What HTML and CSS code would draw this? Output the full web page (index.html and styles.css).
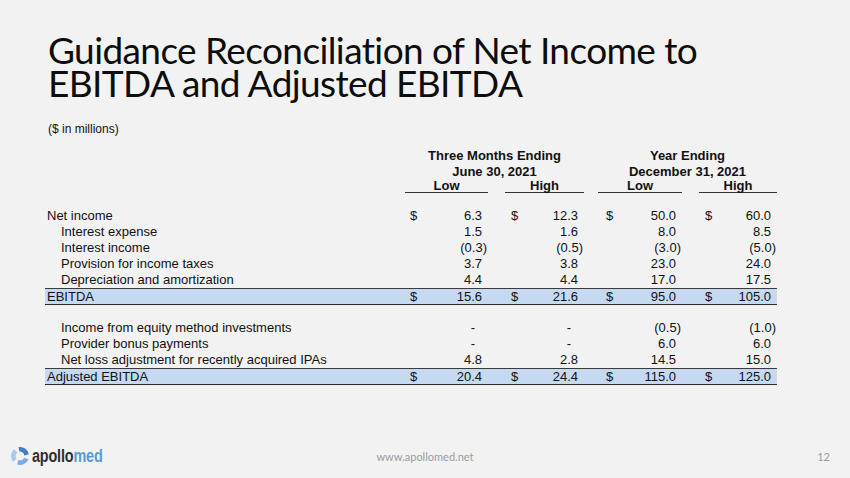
FILE: index.html
```html
<!DOCTYPE html>
<html lang="en">
<head>
<meta charset="utf-8">
<title>Guidance Reconciliation</title>
<link rel="stylesheet" href="styles.css">
</head>
<body>
<div class="slide">
  <h1 class="title">Guidance Reconciliation of Net Income to<br>EBITDA and Adjusted EBITDA</h1>
  <p class="units">($ in millions)</p>

  <div class="recon">
    <div class="grid hdr1">
      <div></div>
      <div class="span a">Three Months Ending</div>
      <div class="span b">Year Ending</div>
    </div>
    <div class="grid hdr2">
      <div></div>
      <div class="span a">June 30, 2021</div>
      <div class="span b">December 31, 2021</div>
    </div>
    <div class="grid hdr3">
      <div></div>
      <div class="g"><span class="ul">Low</span></div>
      <div class="g"><span class="ul">High</span></div>
      <div class="g"><span class="ul">Low</span></div>
      <div class="g"><span class="ul">High</span></div>
    </div>

    <div class="body">
      <div class="grid row">
        <div class="lbl">Net income</div>
        <div class="g"><span class="cur">$</span><span class="num">6.3</span></div>
        <div class="g"><span class="cur">$</span><span class="num">12.3</span></div>
        <div class="g"><span class="cur">$</span><span class="num">50.0</span></div>
        <div class="g"><span class="cur">$</span><span class="num">60.0</span></div>
      </div>
      <div class="grid row">
        <div class="lbl ind">Interest expense</div>
        <div class="g"><span class="num">1.5</span></div>
        <div class="g"><span class="num">1.6</span></div>
        <div class="g"><span class="num">8.0</span></div>
        <div class="g"><span class="num">8.5</span></div>
      </div>
      <div class="grid row">
        <div class="lbl ind">Interest income</div>
        <div class="g"><span class="num neg">(0.3)</span></div>
        <div class="g"><span class="num neg">(0.5)</span></div>
        <div class="g"><span class="num neg">(3.0)</span></div>
        <div class="g"><span class="num neg">(5.0)</span></div>
      </div>
      <div class="grid row">
        <div class="lbl ind">Provision for income taxes</div>
        <div class="g"><span class="num">3.7</span></div>
        <div class="g"><span class="num">3.8</span></div>
        <div class="g"><span class="num">23.0</span></div>
        <div class="g"><span class="num">24.0</span></div>
      </div>
      <div class="grid row">
        <div class="lbl ind">Depreciation and amortization</div>
        <div class="g"><span class="num">4.4</span></div>
        <div class="g"><span class="num">4.4</span></div>
        <div class="g"><span class="num">17.0</span></div>
        <div class="g"><span class="num">17.5</span></div>
      </div>
      <div class="grid row total">
        <div class="lbl">EBITDA</div>
        <div class="g"><span class="cur">$</span><span class="num">15.6</span></div>
        <div class="g"><span class="cur">$</span><span class="num">21.6</span></div>
        <div class="g"><span class="cur">$</span><span class="num">95.0</span></div>
        <div class="g"><span class="cur">$</span><span class="num">105.0</span></div>
      </div>
      <div class="spacer"></div>
      <div class="grid row">
        <div class="lbl ind">Income from equity method investments</div>
        <div class="g"><span class="num dash">-</span></div>
        <div class="g"><span class="num dash">-</span></div>
        <div class="g"><span class="num neg">(0.5)</span></div>
        <div class="g"><span class="num neg">(1.0)</span></div>
      </div>
      <div class="grid row">
        <div class="lbl ind">Provider bonus payments</div>
        <div class="g"><span class="num dash">-</span></div>
        <div class="g"><span class="num dash">-</span></div>
        <div class="g"><span class="num">6.0</span></div>
        <div class="g"><span class="num">6.0</span></div>
      </div>
      <div class="grid row">
        <div class="lbl ind">Net loss adjustment for recently acquired IPAs</div>
        <div class="g"><span class="num">4.8</span></div>
        <div class="g"><span class="num">2.8</span></div>
        <div class="g"><span class="num">14.5</span></div>
        <div class="g"><span class="num">15.0</span></div>
      </div>
      <div class="grid row total">
        <div class="lbl">Adjusted EBITDA</div>
        <div class="g"><span class="cur">$</span><span class="num">20.4</span></div>
        <div class="g"><span class="cur">$</span><span class="num">24.4</span></div>
        <div class="g"><span class="cur">$</span><span class="num">115.0</span></div>
        <div class="g"><span class="cur">$</span><span class="num">125.0</span></div>
      </div>
    </div>
  </div>

  <footer class="footer">
    <div class="logo">
      <svg class="logo-mark" width="18" height="20" viewBox="0 0 18 20" aria-hidden="true">
        <g transform="translate(9 10)">
          <path d="M-1.5 -8.9 A9 9 0 0 1 8.8 -1.8 L4.3 -0.6 A4.4 4.4 0 0 0 -0.6 -4.4 Z" fill="#3f7fc6"/>
          <path d="M-1.5 -8.9 A9 9 0 0 1 8.8 -1.8 L4.3 -0.6 A4.4 4.4 0 0 0 -0.6 -4.4 Z" fill="#7aaade" transform="rotate(120)"/>
          <path d="M-1.5 -8.9 A9 9 0 0 1 8.8 -1.8 L4.3 -0.6 A4.4 4.4 0 0 0 -0.6 -4.4 Z" fill="#aac8ea" transform="rotate(240)"/>
        </g>
      </svg>
      <span class="logo-text"><span class="apollo">apollo</span><span class="med">med</span></span>
    </div>
    <div class="url">www.apollomed.net</div>
    <div class="page">12</div>
  </footer>
</div>
</body>
</html>
```
FILE: styles.css
```css
html, body {
  margin: 0;
  padding: 0;
  background: #f2f2f2;
}

.slide {
  width: 850px;
  height: 478px;
  background: #f2f2f2;
  display: flex;
  flex-direction: column;
  overflow: hidden;
  color: #111;
}

.title {
  margin: 0;
  padding: 33px 0 0 48px;
  font-family: Lato, "Noto Sans", sans-serif;
  font-weight: 400;
  font-size: 37px;
  line-height: 33px;
  letter-spacing: -0.6px;
  font-variant-ligatures: none;
  color: #0d0d0d;
}

.units {
  margin: 23px 0 0 48px;
  font-family: "Liberation Sans", Arial, sans-serif;
  font-size: 12px;
  line-height: 14px;
  color: #111;
}

.recon {
  margin: 12px 0 0 45px;
  width: 732px;
  font-family: "Liberation Sans", Arial, sans-serif;
  font-size: 13px;
  color: #111;
}

.grid {
  display: grid;
  grid-template-columns: 343px 100px 96px 98px 95px;
}

.hdr1, .hdr2, .hdr3 {
  font-weight: bold;
  text-align: center;
}

.hdr1 { height: 16px; line-height: 16px; }
.hdr2 { height: 15px; padding-top: 1px; box-sizing: border-box; line-height: 14px; }
.hdr3 { height: 14px; line-height: 13px; }

.span.a { grid-column: 2 / 4; padding-left: 17px; }
.span.b { grid-column: 4 / 6; padding-left: 14px; }

.g {
  display: flex;
  align-items: center;
  padding-left: 17px;
}

.grid > .g:nth-child(4) { padding-left: 14px; }

.hdr3 .ul {
  display: block;
  flex: 1;
  height: 13px;
  border-bottom: 1px solid #333;
}

.body {
  margin-top: 15px;
}

.row {
  height: 16px;
  line-height: 16px;
}

.lbl {
  padding-left: 2px;
  white-space: nowrap;
}

.lbl.ind {
  padding-left: 16px;
}

.cur {
  margin-left: 5px;
}

.grid > .g:nth-child(3) .cur { margin-left: 6px; }
.grid > .g:nth-child(4) .cur { margin-left: 8px; }
.grid > .g:nth-child(5) .cur { margin-left: 6px; }

.num {
  margin-left: auto;
  padding-right: 6px;
}

.num.neg { padding-right: 1px; }
.num.dash { padding-right: 13px; }

.row.total {
  height: 17px;
  box-sizing: border-box;
  line-height: 15px;
  background: #c5d9f1;
  border-top: 1px solid #3a3a3a;
  border-bottom: 1px solid #2a2a2a;
}

.spacer {
  height: 15px;
}

.footer {
  margin-top: auto;
  height: 28px;
  margin-bottom: 8px;
  display: grid;
  grid-template-columns: 1fr auto 1fr;
  align-items: center;
}

.logo {
  display: flex;
  align-items: center;
  padding-left: 11px;
}

.logo-mark {
  display: block;
}

.logo-text {
  display: inline-block;
  margin-left: 3px;
  font-family: "Liberation Sans", Arial, sans-serif;
  font-weight: bold;
  font-size: 18px;
  line-height: 20px;
  transform: scaleX(0.8);
  transform-origin: left center;
  letter-spacing: -0.2px;
}

.apollo { color: #2f2f2f; }
.med { color: #5b9bd5; }

.url {
  font-family: Lato, "Noto Sans", sans-serif;
  font-size: 11px;
  color: #9c9c9c;
}

.page {
  justify-self: end;
  padding-right: 20px;
  font-family: Lato, "Noto Sans", sans-serif;
  font-size: 11px;
  color: #9c9c9c;
}
```
